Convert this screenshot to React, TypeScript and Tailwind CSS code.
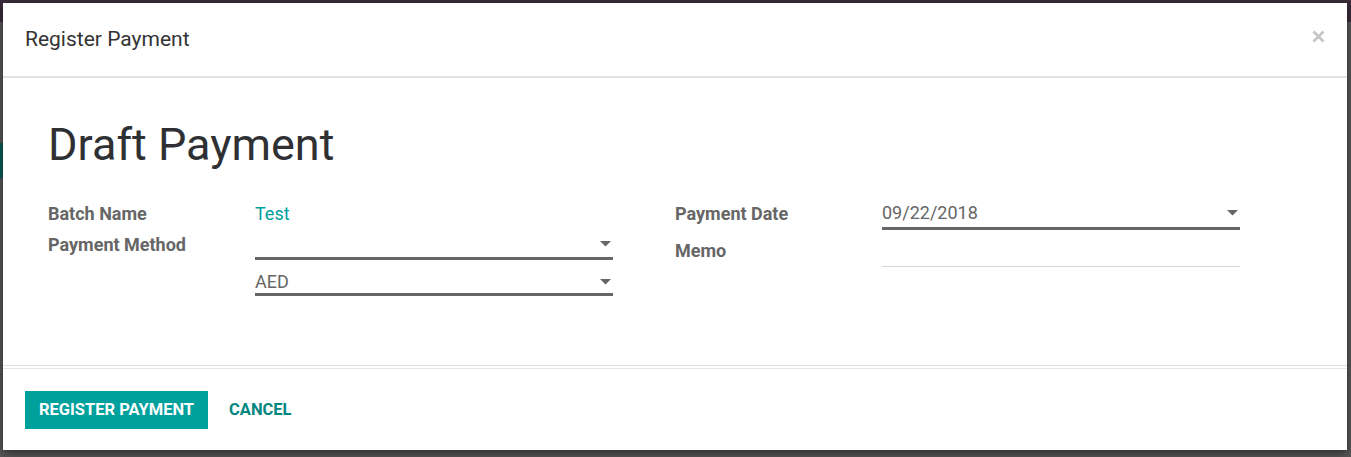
import React from "react";

function Caret() {
  return (
    <svg width="11" height="6" viewBox="0 0 11 6" className="shrink-0">
      <path d="M0 0 L11 0 L5.5 5.5 Z" fill="#666" />
    </svg>
  );
}

export default function App() {
  const font = { fontFamily: "Roboto, 'Liberation Sans', sans-serif" };
  return (
    <div className="relative w-[1351px] h-[457px] overflow-hidden bg-[#575757]" style={font}>
      <div className="h-[22px] bg-[#3b2b3a]" />
      <div className="absolute left-0 top-[143px] w-[3px] h-[35px] bg-[#0b5c58]" />
      <div className="absolute left-[3px] top-[3px] w-[1344px] h-[447px] bg-white flex flex-col shadow-[0_3px_9px_rgba(0,0,0,0.5)]">
        <div className="h-[75px] shrink-0 flex items-center justify-between pl-[22px] pr-[22px] border-b-2 border-[#e2e2e2]">
          <div className="text-[21px] text-[#333] leading-none">Register Payment</div>
          <svg width="13" height="13" viewBox="0 0 13 13" className="-mt-[6px]">
            <path d="M1.5 1.5 L11.5 11.5 M11.5 1.5 L1.5 11.5" stroke="#c6c6c6" strokeWidth="2.8" />
          </svg>
        </div>
        <div className="h-[288px] shrink-0 px-[45px] pt-[44px] border-b border-[#dedede]">
          <div className="text-[45px] text-[#2f3033] leading-none">Draft Payment</div>
          <div className="mt-[34px] flex">
            <div className="w-[627px] flex">
              <div className="w-[207px] text-[18px] font-bold text-[#666]">
                <div className="h-[26px] leading-[26px]">Batch Name</div>
                <div className="mt-[5px] h-[26px] leading-[26px]">Payment Method</div>
              </div>
              <div className="w-[358px]">
                <div className="h-[26px] leading-[26px] text-[18px] text-[#00a09d]">Test</div>
                <div className="h-[33px] flex items-end justify-end pb-[10px] pr-[2px] border-b-[3px] border-[#666]">
                  <Caret />
                </div>
                <div className="h-[36px] pt-[11px] flex items-center justify-between pr-[2px] border-b-[3px] border-[#666]">
                  <span className="text-[18px] leading-[26px] text-[#666]">AED</span>
                  <Caret />
                </div>
              </div>
            </div>
            <div className="flex">
              <div className="w-[207px] text-[18px] font-bold text-[#666]">
                <div className="h-[26px] leading-[26px]">Payment Date</div>
                <div className="mt-[11px] h-[26px] leading-[26px]">Memo</div>
              </div>
              <div className="w-[358px]">
                <div className="h-[29px] pb-[3px] flex items-center justify-between pr-[2px] border-b-[3px] border-[#666]">
                  <span className="text-[18px] leading-[26px] text-[#666]">09/22/2018</span>
                  <Caret />
                </div>
                <div className="h-[37px] border-b border-[#d6d6d6]" />
              </div>
            </div>
          </div>
        </div>
        <div className="mt-[2px] flex-1 flex items-start gap-[21px] px-[22px] pt-[22px] border-t border-[#e6e6e6]">
          <div className="h-[38px] w-[183px] flex items-center justify-center bg-[#00a09d] text-white text-[16.5px] font-bold uppercase">Register Payment</div>
          <div className="h-[38px] flex items-center text-[#01877f] text-[16.5px] font-bold uppercase">Cancel</div>
        </div>
      </div>
    </div>
  );
}
